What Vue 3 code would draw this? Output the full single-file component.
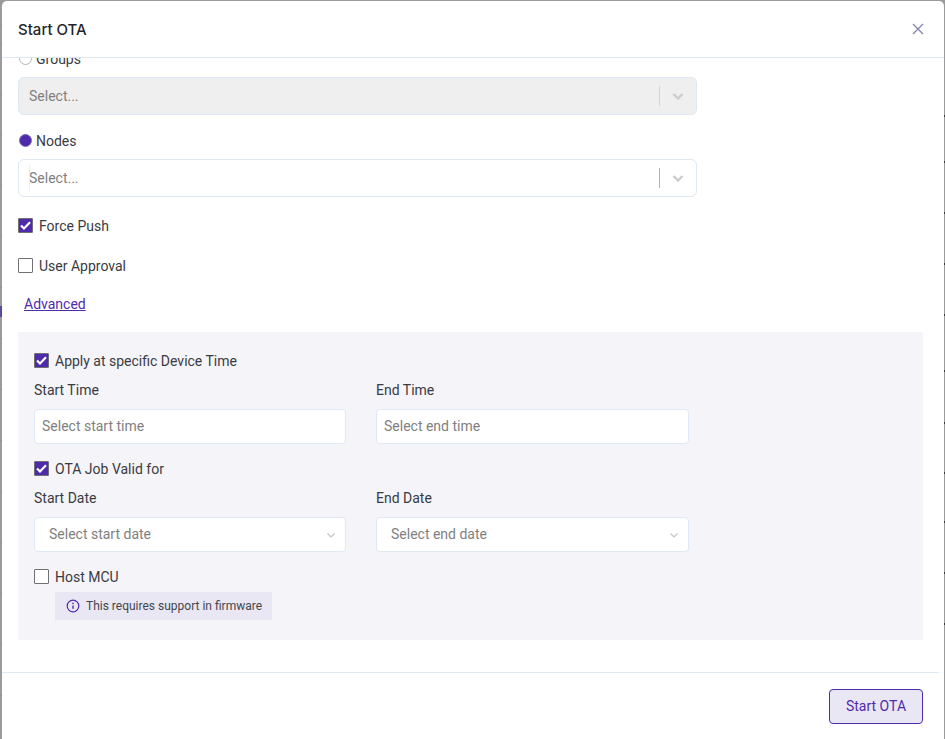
<script setup>
const timeFields = [
  { label: 'Start Time', placeholder: 'Select start time' },
  { label: 'End Time', placeholder: 'Select end time' }
];

const dateFields = [
  { label: 'Start Date', placeholder: 'Select start date' },
  { label: 'End Date', placeholder: 'Select end date' }
];

// bits of the page behind the modal that show at its edges
const leftTicks = [25, 44, 94, 134, 185, 236, 287, 338, 389, 440, 491, 542, 593, 644, 695];
const rightTicks = [115, 161, 212, 263, 314, 370, 422, 472, 521, 572, 623];
</script>

<template>
  <div class="backdrop">
    <span v-for="y in leftTicks" :key="`l${y}`" class="tick left" :style="{ top: `${y}px` }"></span>
    <span v-for="y in rightTicks" :key="`r${y}`" class="tick right" :style="{ top: `${y}px` }"></span>
    <span class="edge-mark"></span>

    <div class="modal">
      <header class="modal-header">
        <h2>Start OTA</h2>
        <svg class="close" width="12" height="12" viewBox="0 0 12 12">
          <path d="M1 1l10 10M11 1L1 11" stroke="#8583b5" stroke-width="1.3" fill="none" />
        </svg>
      </header>

      <div class="modal-body">
        <div class="form">
          <label class="radio-row">
            <span class="radio"></span>
            Groups
          </label>
          <div class="select disabled">
            <span class="select-text">Select...</span>
            <span class="select-sep"></span>
            <svg class="select-arrow" width="20" height="20" viewBox="0 0 20 20">
              <path d="M5.5 8l4.5 4.500L14.500 8" stroke="#cccccc" stroke-width="2.400" fill="none" />
            </svg>
          </div>

          <label class="radio-row nodes-row">
            <span class="radio on"></span>
            Nodes
          </label>
          <div class="select">
            <span class="caret"></span>
            <span class="select-text">Select...</span>
            <span class="select-sep dark"></span>
            <svg class="select-arrow" width="20" height="20" viewBox="0 0 20 20">
              <path d="M5.5 8l4.5 4.500L14.500 8" stroke="#cccccc" stroke-width="2.400" fill="none" />
            </svg>
          </div>

          <label class="check-row force">
            <span class="check on">
              <svg width="15" height="15" viewBox="0 0 15 15"><path d="M3 7.500l3 3 6-6.200" stroke="#fff" stroke-width="2.200" fill="none" /></svg>
            </span>
            Force Push
          </label>
          <label class="check-row approval">
            <span class="check"></span>
            User Approval
          </label>
          <a class="advanced" href="#">Advanced</a>

          <section class="panel">
            <label class="check-row">
              <span class="check on">
                <svg width="15" height="15" viewBox="0 0 15 15"><path d="M3 7.500l3 3 6-6.200" stroke="#fff" stroke-width="2.200" fill="none" /></svg>
              </span>
              Apply at specific Device Time
            </label>
            <div class="field-grid times">
              <div v-for="field in timeFields" :key="field.label" class="field">
                <span class="field-label">{{ field.label }}</span>
                <div class="input">{{ field.placeholder }}</div>
              </div>
            </div>

            <label class="check-row job">
              <span class="check on">
                <svg width="15" height="15" viewBox="0 0 15 15"><path d="M3 7.500l3 3 6-6.200" stroke="#fff" stroke-width="2.200" fill="none" /></svg>
              </span>
              OTA Job Valid for
            </label>
            <div class="field-grid dates">
              <div v-for="field in dateFields" :key="field.label" class="field">
                <span class="field-label">{{ field.label }}</span>
                <div class="input date">
                  {{ field.placeholder }}
                  <svg width="10" height="10" viewBox="0 0 10 10">
                    <path d="M1.500 3.500L5 7l3.500-3.500" stroke="#c4c4c4" stroke-width="1.100" fill="none" />
                  </svg>
                </div>
              </div>
            </div>

            <label class="check-row host">
              <span class="check"></span>
              Host MCU
            </label>
            <div class="tip">
              <svg width="14" height="14" viewBox="0 0 14 14">
                <circle cx="7" cy="7" r="5.800" stroke="#4f2bab" stroke-width="1.200" fill="none" />
                <path d="M7 6.400v3.400" stroke="#4f2bab" stroke-width="1.400" />
                <circle cx="7" cy="4.400" r=".8" fill="#4f2bab" />
              </svg>
              This requires support in firmware
            </div>
          </section>
        </div>
      </div>

      <footer class="modal-footer">
        <button class="primary" type="button">Start OTA</button>
      </footer>
    </div>
  </div>
</template>

<style>
html,
body {
  margin: 0;
  background: #9b9b9b;
}
</style>

<style scoped>
.backdrop {
  box-sizing: border-box;
  position: relative;
  width: 945px;
  height: 739px;
  overflow: hidden;
  padding: 1px 1px 0 2px;
  background: #9b9b9b;
  font-family: Roboto, "Liberation Sans", sans-serif;
  font-size: 14px;
  color: #3a3b42;
}

.tick {
  position: absolute;
  width: 2px;
  height: 1px;
}

.tick.left {
  left: 0;
  background: #8f9099;
}

.tick.right {
  right: 0;
  width: 1px;
  height: 2px;
  background: #3c3c3c;
}

.edge-mark {
  position: absolute;
  left: 0;
  top: 306px;
  width: 2px;
  height: 11px;
  background: #5a4a9c;
}

.modal {
  display: flex;
  flex-direction: column;
  height: 738px;
  border-radius: 5px 5px 0 0;
  background: #fff;
}

.modal-header {
  box-sizing: border-box;
  flex: none;
  display: flex;
  align-items: center;
  justify-content: space-between;
  height: 57px;
  padding: 0 20px 0 16px;
  border-bottom: 1px solid #e0e6ee;
}

.modal-header h2 {
  margin: 0;
  font-family: Inter, sans-serif;
  font-size: 15px;
  font-weight: 500;
  color: #25262b;
}

.close {
  display: block;
}

.modal-body {
  box-sizing: border-box;
  flex: none;
  height: 614px;
  overflow: hidden;
}

.form {
  margin-top: -8px;
  padding: 0 21px 0 16px;
}

.radio-row {
  display: flex;
  align-items: center;
  gap: 4px;
  height: 18px;
  padding-left: 1px;
}

.radio {
  box-sizing: border-box;
  width: 13px;
  height: 13px;
  margin-top: -1px;
  border: 1px solid #b5b5b5;
  border-radius: 50%;
  background: #fff;
}

.radio.on {
  border-color: #7f6bb8;
  background: #4f2bab;
}

.nodes-row {
  margin-top: 17px;
}

.select {
  box-sizing: border-box;
  position: relative;
  display: flex;
  align-items: center;
  width: 679px;
  height: 38px;
  margin-top: 9px;
  padding: 0 8px 0 10px;
  border: 1px solid #dfe8f5;
  border-radius: 6px;
  background: #fff;
}

.select.disabled {
  background: #efefef;
}

.select-text {
  flex: 1;
  color: #7f7f7f;
}

.caret {
  position: absolute;
  left: 10px;
  top: 5px;
  width: 1px;
  height: 26px;
  background: #eceef6;
}

.select-sep {
  width: 1px;
  height: 20px;
  margin-right: 8px;
  background: #d4d4d4;
}

.select-sep.dark {
  background: #b3b3b3;
}

.select-arrow {
  display: block;
}

.check-row {
  display: flex;
  align-items: center;
  gap: 6px;
  height: 16px;
}

.check {
  box-sizing: border-box;
  flex: none;
  width: 15px;
  height: 15px;
  margin-top: -1px;
  border: 1px solid #6f6f74;
  border-radius: 1px;
  background: #fff;
}

.check.on {
  background: #4f2bab;
}

.check svg {
  display: block;
  margin: -1px;
}

.force {
  margin-top: 21px;
}

.approval {
  margin-top: 24px;
}

.advanced {
  display: block;
  width: fit-content;
  margin: 22px 0 0 6px;
  line-height: 17px;
  color: #4f2bab;
}

.panel {
  box-sizing: border-box;
  height: 308px;
  margin-top: 19px;
  padding: 21px 16px 0;
  background: #f4f4f9;
}

.field-grid {
  display: grid;
  grid-template-columns: 312px 313px;
  column-gap: 30px;
}

.times {
  margin-top: 13px;
}

.dates {
  margin-top: 13px;
}

.field {
  display: flex;
  flex-direction: column;
}

.field-label {
  line-height: 16px;
  margin-bottom: 11px;
}

.input {
  box-sizing: border-box;
  height: 35px;
  padding: 0 7px;
  border: 1px solid #dfe8f5;
  border-radius: 4px;
  background: #fff;
  line-height: 33px;
  color: #7f7f7f;
}

.input.date {
  display: flex;
  align-items: center;
  justify-content: space-between;
  padding: 0 9px 0 14px;
}

.job {
  margin-top: 17px;
}

.host {
  margin-top: 17px;
}

.tip {
  display: flex;
  align-items: center;
  gap: 6px;
  width: 217px;
  height: 28px;
  box-sizing: border-box;
  margin: 7px 0 0 21px;
  padding-left: 11px;
  background: #e9e7f3;
  font-size: 12px;
  color: #45464d;
}

.modal-footer {
  box-sizing: border-box;
  flex: none;
  display: flex;
  justify-content: flex-end;
  height: 67px;
  margin-right: 5px;
  padding: 16px 16px 0 0;
  border-top: 1px solid #dfe8f5;
}

.primary {
  box-sizing: border-box;
  width: 94px;
  height: 35px;
  padding: 0 0 2px;
  border: 1px solid #4f2bab;
  border-radius: 4px;
  background: #eae7f5;
  font: inherit;
  color: #4f2bab;
}
</style>
